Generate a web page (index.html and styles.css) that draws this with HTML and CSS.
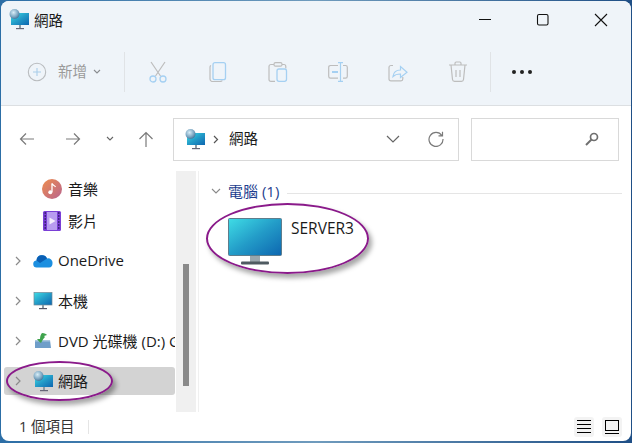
FILE: index.html
```html
<!DOCTYPE html>
<html lang="zh-TW">
<head>
  <meta charset="UTF-8">
  <title>網路</title>
  <link rel="stylesheet" href="styles.css">
</head>
<body>
  <svg class="defs" width="0" height="0">
    <defs>
      <linearGradient id="screen" x1="0" y1="0" x2="1" y2="1">
        <stop offset="0" stop-color="#3fdde6"/>
        <stop offset="0.5" stop-color="#239cc8"/>
        <stop offset="1" stop-color="#0d66b0"/>
      </linearGradient>
      <radialGradient id="globe" cx="0.4" cy="0.35" r="0.7">
        <stop offset="0" stop-color="#d8edf7"/>
        <stop offset="0.6" stop-color="#7fa9c4"/>
        <stop offset="1" stop-color="#3d6f96"/>
      </radialGradient>
      <symbol id="net" viewBox="0 0 20 21">
        <rect x="2" y="4" width="18" height="12" fill="url(#screen)"/>
        <rect x="10" y="16" width="2" height="3" fill="#8b9aa3"/>
        <rect x="7" y="19" width="8" height="1.2" fill="#667"/>
        <circle cx="5.5" cy="5" r="5" fill="url(#globe)"/>
      </symbol>
    </defs>
  </svg>

  <div class="window">
    <header class="titlebar">
      <svg class="icon-net" width="20" height="21"><use href="#net"/></svg>
      <span class="title">網路</span>
      <div class="winbtns">
        <button class="winbtn"><svg width="14" height="14" viewBox="0 0 14 14"><path d="M1 6.5h12" stroke="#111" fill="none"/></svg></button>
        <button class="winbtn"><svg width="14" height="14" viewBox="0 0 14 14"><rect x="1.5" y="1.5" width="10.500" height="10.500" rx="1.500" stroke="#111" stroke-width="1.100" fill="none"/></svg></button>
        <button class="winbtn"><svg width="14" height="14" viewBox="0 0 14 14"><path d="M1 1l12 12M13 1L1 13" stroke="#111" stroke-width="1.100" fill="none"/></svg></button>
      </div>
    </header>

    <div class="toolbar">
      <div class="new-btn">
        <svg width="20" height="20" viewBox="0 0 20 20"><circle cx="10" cy="10" r="8.700" fill="none" stroke="#b9bcbf" stroke-width="1.100"/><path d="M10 6v8M6 10h8" stroke="#a9cdea" stroke-width="1.100"/></svg>
        <span class="new-label">新增</span>
        <svg class="new-chev" width="8" height="6" viewBox="0 0 8 6"><path d="M1 1l3 3 3-3" fill="none" stroke="#8a8d90" stroke-width="1.100"/></svg>
      </div>
      <div class="tool-sep"></div>
      <div class="tool">
        <svg width="20" height="22" viewBox="0 0 20 22"><path d="M3 1l9.500 14M17 1L7.500 15" stroke="#bdbdbd" stroke-width="1.200" fill="none"/><circle cx="5" cy="18" r="3" fill="none" stroke="#a5d0f2" stroke-width="1.300"/><circle cx="15" cy="18" r="3" fill="none" stroke="#a5d0f2" stroke-width="1.300"/></svg>
      </div>
      <div class="tool">
        <svg width="18" height="20" viewBox="0 0 18 20"><path d="M2 3.500C1 4 1 5 1 5v12c0 1.500 1.500 2.500 2.500 2.500H11c1 0 2-.5 2.300-1" fill="none" stroke="#bdbdbd" stroke-width="1.200"/><rect x="4" y="0.700" width="12.500" height="17" rx="2" fill="none" stroke="#a5d0f2" stroke-width="1.300"/></svg>
      </div>
      <div class="tool">
        <svg width="20" height="20" viewBox="0 0 20 20"><path d="M6 2.500H3C1.800 2.500 1 3.300 1 4.500v13c0 1 .800 1.800 2 1.800h4M14 2.500h2c1 0 1.800.800 1.800 2v2" fill="none" stroke="#bdbdbd" stroke-width="1.200"/><rect x="6" y="0.700" width="8" height="3.500" rx="1.500" fill="none" stroke="#bdbdbd" stroke-width="1.200"/><rect x="9" y="7" width="9.500" height="12.300" rx="2" fill="none" stroke="#a5d0f2" stroke-width="1.300"/></svg>
      </div>
      <div class="tool">
        <svg width="20" height="20" viewBox="0 0 20 20"><path d="M10 3.500H2.500C1.300 3.500.7 4.300.7 5.300v9c0 1 .6 1.900 1.800 1.900H10M15 3.500h2.500c1 0 1.800.8 1.800 1.800v9c0 1-.8 1.900-1.800 1.900H15" fill="none" stroke="#bdbdbd" stroke-width="1.200"/><path d="M4 10h6" stroke="#a5d0f2" stroke-width="2"/><path d="M10 .7h5M12.500.7v18.600M10 19.300h5" fill="none" stroke="#a5d0f2" stroke-width="1.200"/></svg>
      </div>
      <div class="tool">
        <svg width="20" height="20" viewBox="0 0 20 20"><path d="M5 3.500H3C1.800 3.500 1 4.300 1 5.500v11.500c0 1 .8 1.800 2 1.800h10c1 0 1.800-.8 1.800-1.800v-2" fill="none" stroke="#bdbdbd" stroke-width="1.200"/><path d="M5 14.500c.5-4 3-6.500 7.500-6.500V4.500l6.500 5.700-6.500 5.300v-3.500c-3 0-5.500.5-7.500 2.500z" fill="none" stroke="#a5d0f2" stroke-width="1.200"/></svg>
      </div>
      <div class="tool">
        <svg width="20" height="21" viewBox="0 0 20 21"><path d="M1 4h18M7 4V2.200C7 1.500 7.500 1 8.200 1h3.600c.7 0 1.200.5 1.200 1.200V4M3 4l1.500 14.500c.1 1 1 1.800 2 1.800h7c1 0 1.900-.8 2-1.800L17 4M8 9v7M12 9v7" fill="none" stroke="#bdbdbd" stroke-width="1.200"/></svg>
      </div>
      <div class="tool-sep sep-right"></div>
      <div class="more"><i></i><i></i><i></i></div>
    </div>

    <nav class="navbar">
      <div class="navbtns">
        <svg width="16" height="14" viewBox="0 0 16 14"><path d="M15 7H1.500M7 1.500L1.500 7 7 12.500" fill="none" stroke="#7a7a7a" stroke-width="1.200"/></svg>
        <svg width="16" height="14" viewBox="0 0 16 14"><path d="M1 7h13.500M9 1.500L14.500 7 9 12.500" fill="none" stroke="#7a7a7a" stroke-width="1.200"/></svg>
        <svg class="nav-chev" width="8" height="6" viewBox="0 0 8 6"><path d="M1 1l3 3 3-3" fill="none" stroke="#666" stroke-width="1.100"/></svg>
        <svg width="16" height="16" viewBox="0 0 16 16"><path d="M8 16V1.500M1.500 8L8 1.500 14.500 8" fill="none" stroke="#7a7a7a" stroke-width="1.200"/></svg>
      </div>
      <div class="address">
        <svg class="icon-net" width="20" height="21"><use href="#net"/></svg>
        <svg class="crumb" width="6" height="9" viewBox="0 0 6 9"><path d="M1 1l3.500 3.500L1 8" fill="none" stroke="#555" stroke-width="1.200"/></svg>
        <span class="addr-text">網路</span>
        <svg class="addr-drop" width="14" height="8" viewBox="0 0 14 8"><path d="M1 1l6 6 6-6" fill="none" stroke="#666" stroke-width="1.200"/></svg>
        <svg class="addr-refresh" width="16" height="16" viewBox="0 0 16 16"><path d="M13.800 4.500A7 7 0 1 0 15 8M14.500 .8v4h-4" fill="none" stroke="#7a7a7a" stroke-width="1.200"/></svg>
      </div>
      <div class="search">
        <svg width="14" height="14" viewBox="0 0 14 14"><circle cx="9" cy="5" r="3.500" fill="none" stroke="#6f6f6f" stroke-width="1.700"/><path d="M6.500 7.500L1 13" stroke="#6f6f6f" stroke-width="2"/></svg>
      </div>
    </nav>

    <div class="body">
      <aside class="sidebar">
        <div class="tree">
          <div class="row row-sub">
            <svg class="row-icon" width="20" height="20" viewBox="0 0 20 20"><defs><linearGradient id="music" x1="0" y1="0" x2="1" y2="1"><stop offset="0" stop-color="#ee8d4e"/><stop offset="1" stop-color="#b8648f"/></linearGradient></defs><circle cx="10" cy="10" r="10" fill="url(#music)"/><path d="M10 4.500v8.500" stroke="#fff" stroke-width="1.300"/><path d="M10 4.500c.5 2 3 2 3.500 3.500" stroke="#fff" stroke-width="1.200" fill="none"/><circle cx="8.300" cy="13.300" r="2" fill="#fff"/></svg>
            <span>音樂</span>
          </div>
          <div class="row row-sub row-last">
            <svg class="row-icon" width="20" height="20" viewBox="0 0 20 20"><rect x="1" y="0" width="18" height="20" rx="1.500" fill="#7a3fd6"/><rect x="5" y="1" width="10" height="18" fill="#b89cf0"/><path d="M7.500 6.500v7l6-3.500z" fill="#f3eefc"/><path d="M2.500 2h1.500M2.500 5h1.500M2.500 8h1.500M2.500 11h1.500M2.500 14h1.500M2.500 17h1.500M16 2h1.500M16 5h1.500M16 8h1.500M16 11h1.500M16 14h1.500M16 17h1.500" stroke="#2f1a66" stroke-width="1.600"/></svg>
            <span>影片</span>
          </div>
          <div class="row">
            <svg class="chev" width="6" height="10" viewBox="0 0 6 10"><path d="M1 1l4 4-4 4" fill="none" stroke="#8a8a8a" stroke-width="1.200"/></svg>
            <svg class="row-icon" width="20" height="14" viewBox="0 0 20 14"><path d="M4 13.500a3.500 3.500 0 0 1-.5-7A5.500 5.500 0 0 1 14 4.500a4.500 4.500 0 0 1 5.500 5c0 2-1 4-3.500 4z" fill="#1c8fe0"/><path d="M3.500 6.500A5.500 5.500 0 0 1 14 4.500L7 9z" fill="#0a5fb4"/></svg>
            <span>OneDrive</span>
          </div>
          <div class="row">
            <svg class="chev" width="6" height="10" viewBox="0 0 6 10"><path d="M1 1l4 4-4 4" fill="none" stroke="#8a8a8a" stroke-width="1.200"/></svg>
            <svg class="row-icon" width="20" height="18" viewBox="0 0 20 18"><rect x="1" y="0.500" width="18" height="12.500" fill="url(#screen)" stroke="#6f8794" stroke-width="0.700"/><rect x="9" y="13" width="2" height="3" fill="#8b9aa3"/><rect x="6" y="16" width="8" height="1.200" fill="#556"/></svg>
            <span>本機</span>
          </div>
          <div class="row">
            <svg class="chev" width="6" height="10" viewBox="0 0 6 10"><path d="M1 1l4 4-4 4" fill="none" stroke="#8a8a8a" stroke-width="1.200"/></svg>
            <svg class="row-icon" width="20" height="16" viewBox="0 0 20 16"><path d="M2 7h15l1 8H2z" fill="#6f9ec9"/><path d="M2 7h15v1.500H2z" fill="#a9c6de"/><path d="M9 0c3 0 4 1 5 2l-3 1 1 1c-2 2-3 4-4 6C6 9 5 7 4 6l3 0C7 3 8 1 9 0z" fill="#3fa34d"/></svg>
            <span>DVD 光碟機 (D:) G</span>
          </div>
          <div class="row row-on">
            <svg class="chev" width="6" height="10" viewBox="0 0 6 10"><path d="M1 1l4 4-4 4" fill="none" stroke="#8a8a8a" stroke-width="1.200"/></svg>
            <svg class="row-icon" width="20" height="21"><use href="#net"/></svg>
            <span>網路</span>
          </div>
        </div>
        <div class="scrollbar"><div class="thumb"></div></div>
      </aside>

      <main class="content">
        <div class="group">
          <svg width="10" height="6" viewBox="0 0 10 6"><path d="M1 1l4 4 4-4" fill="none" stroke="#8a8a8a" stroke-width="1.100"/></svg>
          <span class="group-name">電腦 (1)</span>
          <div class="group-line"></div>
        </div>
        <div class="item">
          <svg width="54" height="47" viewBox="0 0 54 47"><rect x="0.500" y="0.500" width="53" height="37" rx="1" fill="url(#screen)" stroke="#5e7d8c"/><rect x="22" y="38" width="10" height="6" fill="#9aa6ad"/><rect x="13" y="43.500" width="28" height="3" rx="1" fill="#4f5a61"/></svg>
          <span class="item-name">SERVER3</span>
        </div>
      </main>
    </div>

    <footer class="statusbar">
      <span class="status-text">1 個項目</span>
      <div class="status-sep"></div>
      <div class="views">
        <button class="view"><svg width="14" height="13" viewBox="0 0 14 13"><path d="M0 .5h14M0 4.500h14M0 8.500h14M0 12.500h14" stroke="#000"/></svg></button>
        <button class="view"><svg width="14" height="14" viewBox="0 0 14 14"><rect x="0.500" y="0.500" width="13" height="10" fill="none" stroke="#000"/><path d="M0 13.500h14" stroke="#000"/></svg></button>
      </div>
    </footer>

    <div class="mark mark-nav"></div>
    <div class="mark mark-item"></div>
  </div>
</body>
</html>
```

FILE: styles.css
```css
* {
  box-sizing: border-box;
}

body {
  margin: 0;
  width: 632px;
  height: 443px;
  overflow: hidden;
  background: linear-gradient(90deg, #2c6ea6, #6f9bbd 50%, #1f4f86);
  font-family: "Open Sans", "Noto Sans CJK TC", sans-serif;
  font-size: 15px;
  color: #1a1a1a;
}

.defs {
  position: absolute;
}

.window {
  position: relative;
  margin: 1px 0 0 1px;
  width: 630px;
  height: 440px;
  border-radius: 8px;
  overflow: hidden;
  background: white;
  display: flex;
  flex-direction: column;
}

.titlebar {
  height: 37px;
  flex: none;
  background: #eff4f9;
  display: flex;
  align-items: center;
  padding-left: 8px;
}

.title {
  margin-left: 5px;
  font-size: 14.500px;
}

.winbtns {
  margin-left: auto;
  margin-right: 1px;
  display: flex;
}

.winbtn {
  width: 58px;
  height: 37px;
  padding: 0;
  border: none;
  background: none;
  display: flex;
  align-items: center;
  justify-content: center;
}

.toolbar {
  height: 68px;
  flex: none;
  background: #eff4f9;
  border-bottom: 1px solid #dcdfe2;
  display: flex;
  align-items: center;
  padding: 0 0 0 26px;
}

.new-btn {
  width: 97px;
  display: flex;
  align-items: center;
}

.new-label {
  margin-left: 11px;
  font-size: 14.500px;
  margin-bottom: 2px;
  color: #9a9a9a;
}

.new-chev {
  margin-left: 6px;
}

.tool-sep {
  width: 1px;
  height: 40px;
  background: #e0e3e6;
}

.tool {
  width: 60px;
  height: 40px;
  display: flex;
  align-items: center;
  justify-content: center;
}

.tool:nth-of-type(3) {
  margin-left: 3px;
}

.sep-right {
  margin-left: 2px;
}

.more {
  margin-left: 21px;
  display: flex;
  gap: 4px;
}

.more i {
  width: 4px;
  height: 4px;
  border-radius: 50%;
  background: #222;
}

.navbar {
  height: 65px;
  flex: none;
  display: flex;
  align-items: center;
  padding: 1px 0 0 0;
}

.navbtns {
  width: 172px;
  display: flex;
  align-items: center;
  padding-left: 18px;
}

.navbtns svg:nth-child(2) {
  margin-left: 30px;
}

.nav-chev {
  margin-left: 25px;
}

.navbtns svg:nth-child(4) {
  margin-left: 24px;
}

.address {
  width: 286px;
  height: 43px;
  border: 1px solid #d9d9d9;
  display: flex;
  align-items: center;
  padding-left: 11px;
}

.crumb {
  margin-left: 8px;
}

.addr-text {
  margin: 0 0 3px 10px;
  font-size: 14.500px;
}

.addr-drop {
  margin-left: auto;
}

.addr-refresh {
  margin: 0 14px 0 28px;
}

.search {
  margin-left: 12px;
  width: 148px;
  height: 43px;
  border: 1px solid #d9d9d9;
  display: flex;
  align-items: center;
  justify-content: flex-end;
  padding-right: 19px;
}

.body {
  height: 241px;
  flex: none;
  display: flex;
}

.sidebar {
  width: 198px;
  flex: none;
  display: flex;
  border-right: 1px solid #f0f0f0;
}

.tree {
  width: 174px;
  flex: none;
  padding: 4px 0 0 3px;
  overflow: hidden;
}

.row {
  height: 28px;
  margin-bottom: 12px;
  display: flex;
  align-items: center;
  padding-left: 11px;
  border-radius: 3px;
  white-space: nowrap;
}

.row span {
  margin-bottom: 2px;
}

.row-sub {
  padding-left: 38px;
  margin-bottom: 4px;
}

.row-last {
  margin-bottom: 12px;
}

.row-sub .row-icon {
  margin-right: 6px;
}

.chev {
  flex: none;
  margin-right: 12px;
}

.row-icon {
  flex: none;
  margin-right: 5px;
}

.row-on {
  background: #d3d3d3;
}

.scrollbar {
  width: 20px;
  flex: none;
  margin-left: 1px;
  background: #f0f0f0;
  padding: 93px 7px 0;
}

.thumb {
  width: 6px;
  height: 122px;
  background: #8a8a8a;
}

.content {
  flex: 1;
  padding: 12px 9px 0 12px;
}

.group {
  height: 16px;
  display: flex;
  align-items: center;
}

.group-name {
  margin: 0 0 2px 7px;
  font-size: 15px;
  color: #1f3f8f;
}

.group-line {
  flex: 1;
  height: 1px;
  margin: 4px 0 0 8px;
  background: #e5e5e5;
}

.item {
  margin: 19px 0 0 17px;
  display: flex;
  align-items: flex-start;
}

.item-name {
  margin-left: 9px;
  font-size: 15.500px;
  line-height: 20px;
}

.statusbar {
  flex: 1;
  display: flex;
  align-items: center;
  padding: 0 9px 0 18px;
}

.status-text {
  font-size: 14.500px;
  margin-bottom: 2px;
  color: #333;
}

.status-sep {
  width: 1px;
  height: 14px;
  margin-left: 13px;
  background: #e5e5e5;
}

.views {
  margin-left: auto;
  display: flex;
  gap: 8px;
}

.view {
  width: 20px;
  height: 20px;
  padding: 0;
  border: none;
  border-radius: 3px;
  background: #f3f3f3;
  display: flex;
  align-items: center;
  justify-content: center;
}

/* the purple hand-drawn circles lie over the content */
.mark {
  position: absolute;
  border: 2px solid #8a1a8a;
  border-radius: 50%;
  box-shadow: 3px 4px 5px rgba(0, 0, 0, 0.35);
}

.mark-nav {
  left: 5px;
  top: 360px;
  width: 107px;
  height: 40px;
}

.mark-item {
  left: 205px;
  top: 202px;
  width: 163px;
  height: 71px;
}
```
